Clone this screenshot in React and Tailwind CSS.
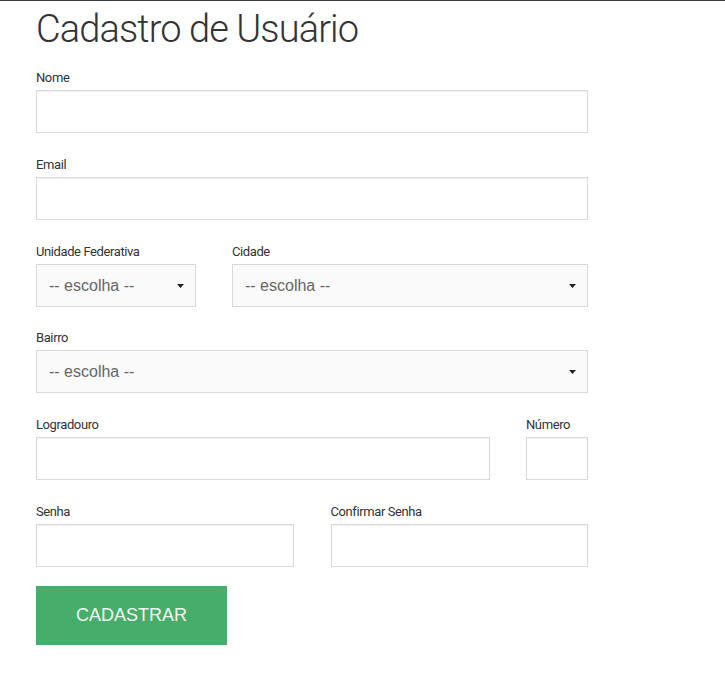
import React from "react";

const labelCls =
  "block h-[20px] leading-[20px] mb-[2px] text-[13px] text-[#333] tracking-[-0.4px]";
const inputCls =
  "block w-full h-[43px] border border-[#d9d9d9] bg-white shadow-[inset_0_1px_1px_rgba(0,0,0,0.06)] outline-none";

function Caret() {
  return (
    <svg width="7" height="4" viewBox="0 0 7 4" className="shrink-0">
      <path d="M0 0 L7 0 L3.5 4 Z" fill="#222" />
    </svg>
  );
}

function Select() {
  return (
    <div className="flex items-center justify-between h-[43px] border border-[#d9d9d9] bg-[#fafafa] pl-[12px] pr-[11px]">
      <span className="text-[16px] text-[#666] font-['Liberation_Sans',Arial,sans-serif]">
        -- escolha --
      </span>
      <Caret />
    </div>
  );
}

function Field({ label, className = "" }) {
  return (
    <div className={className}>
      <label className={labelCls}>{label}</label>
      <input type="text" className={inputCls} />
    </div>
  );
}

export default function App() {
  return (
    <div className="min-h-[679px] w-full bg-white border-t border-[#3a3a3a] font-['Roboto',sans-serif]">
      <div className="pl-[36px] w-[588px]">
        <h1 className="text-[38px] leading-[46px] pt-[5px] font-light text-[#333] tracking-[-0.9px] h-[67px]">
          Cadastro de Usuário
        </h1>
        <div className="flex flex-col gap-[22px]">
          <Field label="Nome" />
          <Field label="Email" />
          <div className="flex gap-[36px]">
            <div className="w-[160px]">
              <label className={labelCls}>Unidade Federativa</label>
              <Select />
            </div>
            <div className="flex-1">
              <label className={labelCls}>Cidade</label>
              <Select />
            </div>
          </div>
          <div className="-mt-[1px]">
            <label className={labelCls}>Bairro</label>
            <Select />
          </div>
          <div className="flex gap-[36px]">
            <Field label="Logradouro" className="flex-1" />
            <Field label="Número" className="w-[62px]" />
          </div>
          <div className="flex gap-[37px]">
            <Field label="Senha" className="flex-1" />
            <Field label="Confirmar Senha" className="flex-1" />
          </div>
          <div className="-mt-[3px]">
            <button className="w-[191px] h-[59px] bg-[#46ad6b] text-[18px] text-[#eef8f1] font-['Liberation_Sans',Arial,sans-serif]">
              CADASTRAR
            </button>
          </div>
        </div>
      </div>
    </div>
  );
}
